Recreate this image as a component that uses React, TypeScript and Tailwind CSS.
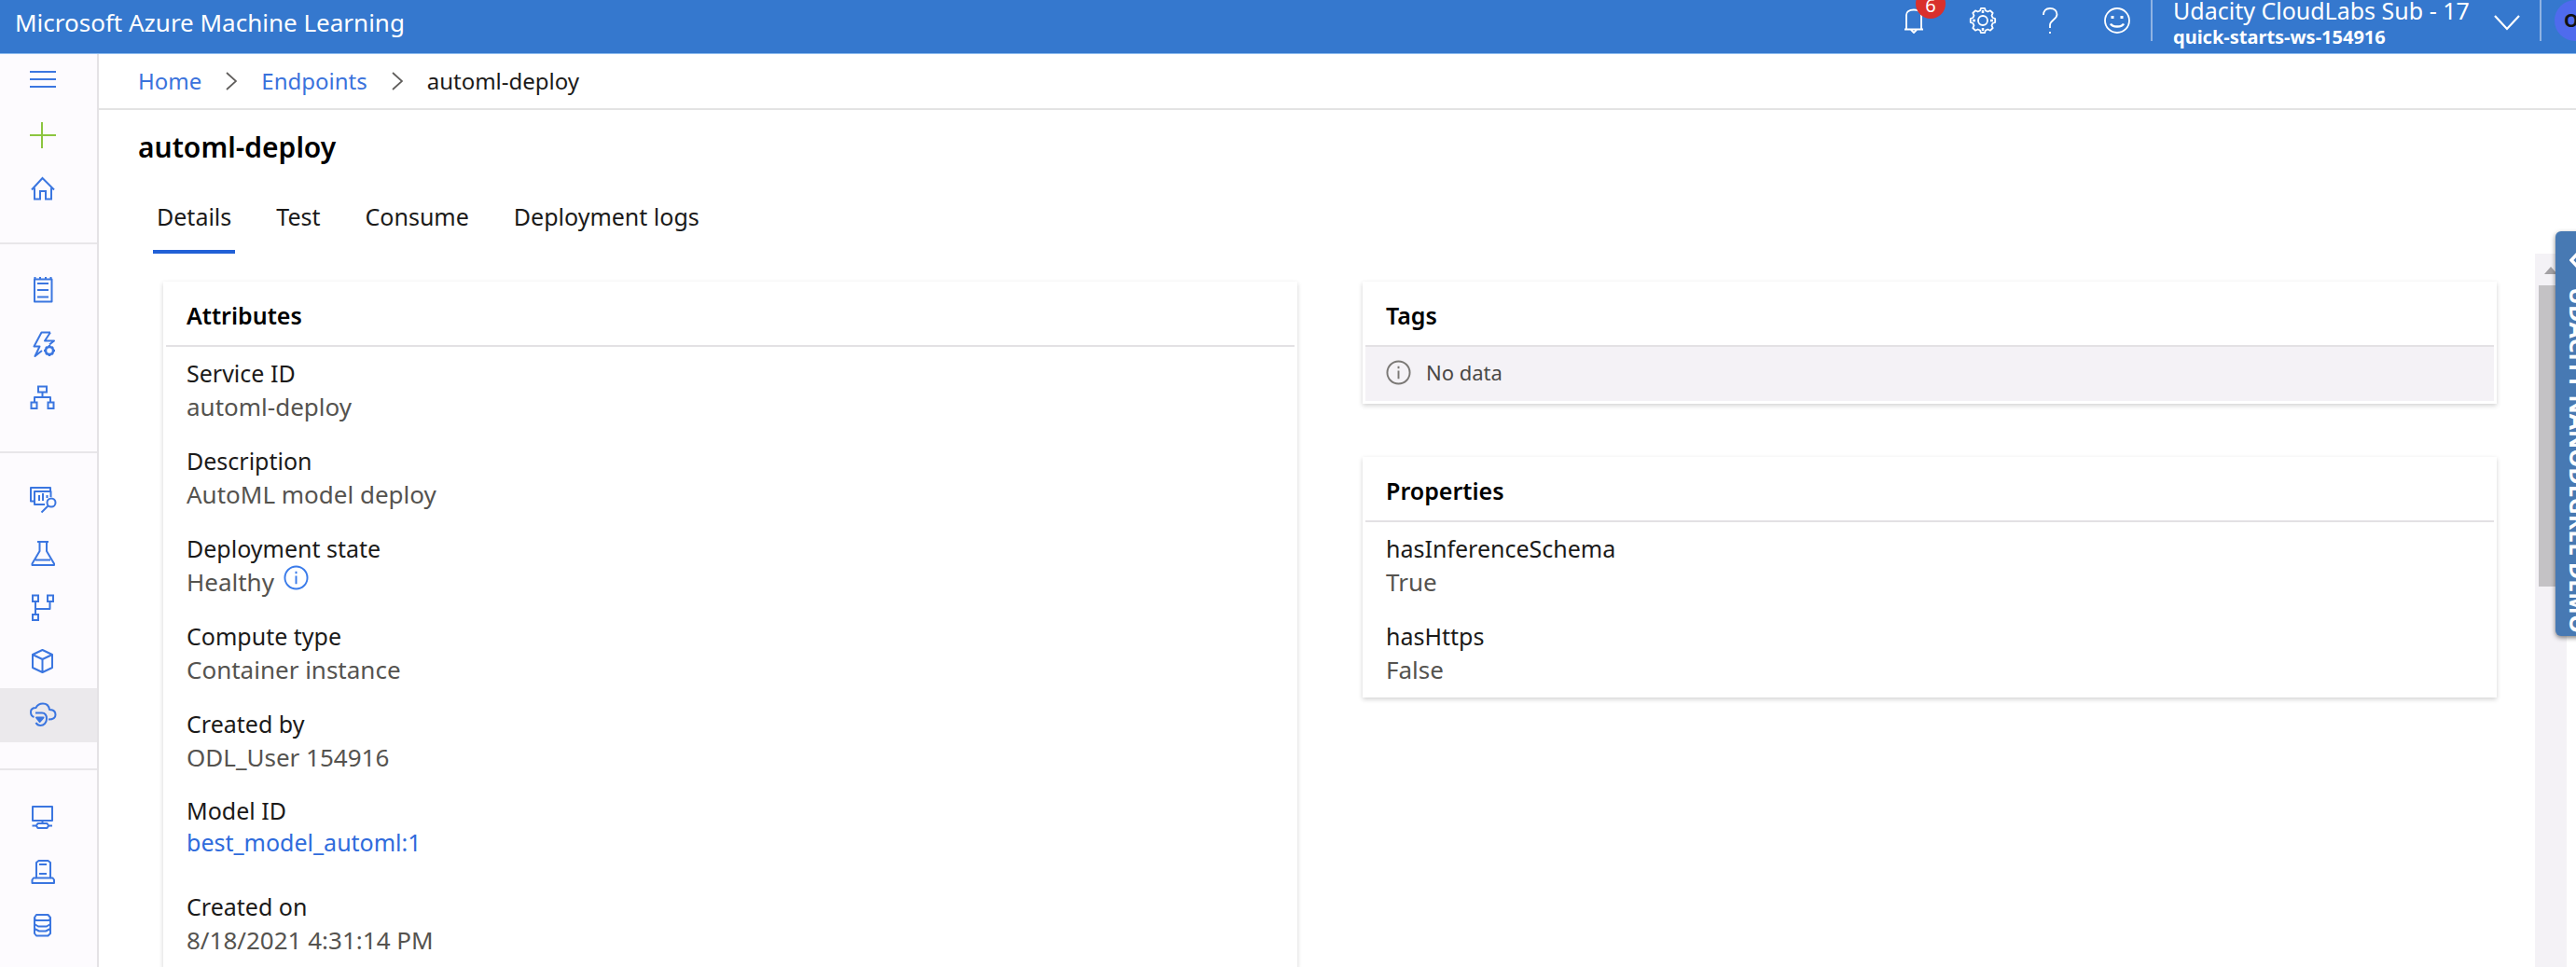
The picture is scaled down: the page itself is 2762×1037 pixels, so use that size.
import React from "react";

type IconProps = { className?: string; children: React.ReactNode };

function Icon({ className = "", children }: IconProps) {
  return (
    <svg
      viewBox="0 0 28 28"
      className={"h-7 w-7 shrink-0 overflow-visible " + className}
      fill="none"
      stroke="currentColor"
      strokeWidth="2"
      strokeLinejoin="round"
      aria-hidden="true"
    >
      {children}
    </svg>
  );
}

type NavItem = { label: string; icon: React.ReactNode; active?: boolean; green?: boolean };

const navGroups: NavItem[][] = [
  [
    { label: "Menu", icon: <path d="M0 4H28M0 12H28M0 20H28" /> },
    { label: "New", green: true, icon: <path d="M0 14H28M13 0V28" /> },
    {
      label: "Home",
      icon: <path d="M2 14.5L13.5 2L26 14.5M5 12.5V24.5H11V16H17V24.5H23V12.5" strokeLinejoin="miter" />,
    },
  ],
  [
    {
      label: "Notebooks",
      icon: (
        <>
          <path d="M5 2.5H23.5V26.5H5Z" />
          <path d="M8 7H20M8 14H20M8 21.5H20" />
          <path d="M5.5 0V3M11 0V3M17 0V3M22.5 0V3" />
        </>
      ),
    },
    {
      label: "Automated ML",
      icon: (
        <>
          <path d="M22 1.5H12.5L4.5 16.5H10.5L5.5 27L13 21M22 1.5L16 10.5H26L21 14.5" />
          <circle cx="21" cy="21" r="4" strokeWidth="2.5" />
          <path d="M21 15V17.5M21 24.5V27M15 21H17.5M24.5 21H27M17 17L18.5 18.5M25 17L23.5 18.5M17 25L18.5 23.5M25 25L23.5 23.5" strokeWidth="2.5" />
        </>
      ),
    },
    {
      label: "Designer",
      icon: (
        <>
          <path d="M9 1.5H18V7.5H9ZM1.5 18.5H7.5V25H1.5ZM19.5 18.5H25.5V25H19.5Z" strokeLinejoin="miter" />
          <path d="M13.5 7.5V13M5 18.5V13H22V18.5" />
        </>
      ),
    },
  ],
  [
    {
      label: "Datasets",
      icon: (
        <>
          <path d="M5 16.5H1V2H22V6" />
          <path d="M16 20H5V6H22.5V12" />
          <path d="M10 16V10M14 16V8M18.5 13V10" />
          <circle cx="23" cy="18" r="4.5" />
          <path d="M19.5 21.5L12.5 28.5" />
        </>
      ),
    },
    {
      label: "Experiments",
      icon: <path d="M8 2H20M10.5 2V12L2.5 25.5V27H26V25.5L18 12V2M6 21.5H22" />,
    },
    {
      label: "Pipelines",
      icon: (
        <>
          <path d="M3 1.5H9V8H3ZM19 1.5H25V8H19ZM3 22H9V28H3Z" strokeLinejoin="miter" />
          <path d="M6 8V22M6 16H21.5V8" />
        </>
      ),
    },
    {
      label: "Models",
      icon: <path d="M13.5 2L24 7V21L13.5 26L3 21V7ZM3 7L13.5 12L24 7M13.5 12V26" />,
    },
    {
      label: "Endpoints",
      active: true,
      icon: (
        <>
          <path d="M4.5 16C1.5 15 1 12.5 1 10.5C1 7.5 3 6 6.5 6C8 3 10.5 1.5 14 1.5C18 1.5 20.5 4 21 8C25 8 27.5 10 27.5 13.5C27.5 16.5 25 18.500 20 18.500" />
          <path d="M6 11.5H13C16.5 11.5 18 14.5 18 18C18 22 15 25 11.5 25C9 25 7.5 24 6.5 22" />
          <path d="M7 16.5H14.5L10.5 21Z" fill="currentColor" />
        </>
      ),
    },
  ],
  [
    {
      label: "Compute",
      icon: (
        <>
          <path d="M3 4H24V19H3ZM13.5 19V22M2.5 24.5H7M20 24.5H24" />
          <path d="M8.5 22H18.5L20 24.5L18.5 27H8.5L7 24.5Z" />
        </>
      ),
    },
    {
      label: "Datastores",
      icon: (
        <>
          <path d="M7 22.5V6L9.5 4H19.5L22 6V22.5Z" />
          <path d="M10 8H18M10 18H18" />
          <path d="M7 22.5H4L2.5 24.5V28H26V24.5L24.5 22.5H22" />
        </>
      ),
    },
    {
      label: "Data labeling",
      icon: (
        <>
          <path d="M5 7V24L7 26.5H19.5L22 24V7" />
          <path d="M5 7L7 4H19.5L22 7L21 10H6Z" />
          <path d="M5 14L9 16.5H18L22 14M5 19L10 21.5H17L22 19" />
        </>
      ),
    },
  ],
];

function SideNav() {
  return (
    <nav aria-label="Workspace" className="w-[106px] shrink-0 overflow-hidden border-r-2 border-[#e4e2e5] bg-[#fdfbfe]">
      {navGroups.map((group, i) => (
        <div key={i} className={i === 0 ? "pb-7" : "border-t-2 border-[#e8e6e9] pt-5 pb-7"}>
          {group.map((item) => (
            <button
              key={item.label}
              type="button"
              aria-label={item.label}
              aria-current={item.active ? "page" : undefined}
              className={
                "flex h-[58px] w-full items-center pl-8 " +
                (item.active ? "bg-[#ebe9ec] " : "") +
                (item.green ? "text-[#8cc540]" : "text-[#3b76e0]")
              }
            >
              <Icon>{item.icon}</Icon>
            </button>
          ))}
        </div>
      ))}
    </nav>
  );
}

function Header() {
  return (
    <header className="flex h-[58px] shrink-0 items-start overflow-hidden border-b border-[#8fbdf0] bg-[#3578ce] text-white">
      <div className="flex-1 pl-4 text-[26px] leading-[48px]">Microsoft Azure Machine Learning</div>

      <button type="button" aria-label="Notifications" className="relative flex h-11 w-[72px] items-center justify-center">
        <Icon>
          <path d="M2 23.5H22M4 23.5V8C4 4.5 7 2.5 12 2.5C17 2.5 20 4.5 20 8V23.5M9 24L12 27L15 24" strokeWidth="1.8" />
        </Icon>
        <span className="absolute -top-3 left-9 flex h-8 w-8 items-center justify-center rounded-full bg-[#d9302c] pt-1 text-[20px] leading-7">
          6
        </span>
      </button>
      <button type="button" aria-label="Settings" className="flex h-11 w-[72px] items-center justify-center">
        <Icon>
          <path
            strokeWidth="1.8"
            d="M11 3.5L12 0.8H16L17 3.5L19.3 4.5L22 3.3L24.7 6L23.5 8.7L24.5 11L27.2 12V16L24.5 17L23.5 19.3L24.7 22L22 24.7L19.3 23.5L17 24.5L16 27.2H12L11 24.5L8.7 23.5L6 24.7L3.3 22L4.5 19.3L3.5 17L0.8 16V12L3.5 11L4.5 8.7L3.3 6L6 3.3L8.7 4.5Z"
          />
          <circle cx="14" cy="14" r="5" strokeWidth="1.8" />
          <path d="M14 3V6M14 22V25M3 14H6M22 14H25" strokeWidth="2.5" />
        </Icon>
      </button>
      <button type="button" aria-label="Help" className="flex h-11 w-[72px] items-center justify-center">
        <Icon>
          <path
            strokeWidth="1.8"
            d="M7 8C7 3.5 9.5 1 14 1C18.5 1 21.5 3.5 21.5 7.5C21.5 13 14 13.5 14 19V22M14 26V28"
          />
        </Icon>
      </button>
      <button type="button" aria-label="Feedback" className="flex h-11 w-[72px] items-center justify-center">
        <Icon>
          <circle cx="14" cy="14" r="13" strokeWidth="1.8" />
          <path d="M7 17.5C9 21.5 19 21.5 21 17.5" strokeWidth="2.5" />
          <path d="M7.5 10.5H10.5M17.5 10.5H20.5" strokeWidth="3" />
        </Icon>
      </button>

      <button type="button" className="flex h-[58px] items-start text-left">
        <span className="h-11 border-l-2 border-[#8fb3e3]" />
        <span className="block w-[366px] pl-[22px]">
          <span className="block text-[25px] leading-[22px]">Udacity CloudLabs Sub - 17</span>
          <span className="block text-[20px] font-bold leading-9">quick-starts-ws-154916</span>
        </span>
        <svg viewBox="0 0 28 18" className="mt-[15px] mr-[21px] h-[18px] w-7" fill="none" stroke="currentColor" strokeWidth="2.2" aria-hidden="true">
          <path d="M1 2L14 16L27 2" />
        </svg>
        <span className="h-11 border-l-2 border-[#8fb3e3]" />
      </button>
      <div className="w-[37px] overflow-hidden pl-[14px]">
        <button type="button" aria-label="Account" className="flex h-11 w-11 items-center rounded-full bg-[#4f6bed] pl-2.5 text-[20px] font-bold text-[#111]">
          O
        </button>
      </div>
    </header>
  );
}

function Chevron() {
  return (
    <svg viewBox="0 0 12 20" className="h-5 w-3" fill="none" stroke="#605e5c" strokeWidth="1.8" aria-hidden="true">
      <path d="M1 1L11 10L1 19" />
    </svg>
  );
}

function InfoIcon({ className = "" }: { className?: string }) {
  return (
    <svg viewBox="0 0 28 28" className={"h-[27px] w-[27px] " + className} fill="none" stroke="currentColor" strokeWidth="2" aria-hidden="true">
      <circle cx="14" cy="14" r="12.5" />
      <path d="M14 12V21M14 7V9.5" />
    </svg>
  );
}

function Card({ title, className = "", children }: { title: string; className?: string; children: React.ReactNode }) {
  return (
    <section className={"bg-white px-[3px] shadow-[0_2px_5px_rgba(0,0,0,0.18)] " + className}>
      <h2 className="flex h-[70px] items-center border-b-2 border-[#e3e1e4] px-[22px] pt-1.5 text-[25px] font-semibold text-black">
        {title}
      </h2>
      {children}
    </section>
  );
}

function Field({ label, last, children }: { label: string; last?: boolean; children: React.ReactNode }) {
  return (
    <div className={last ? "" : "mb-[22px]"}>
      <dt className="text-[25px] leading-9 text-[#1b1a19]">{label}</dt>
      <dd className="flex text-[26px] leading-9 text-[#55534f]">{children}</dd>
    </div>
  );
}

const tabs = ["Details", "Test", "Consume", "Deployment logs"];

export default function App() {
  return (
    <div className="relative flex h-screen flex-col overflow-hidden bg-white font-['Noto_Sans',sans-serif] text-[#1b1a19]">
      <Header />
      <div className="flex min-h-0 flex-1">
        <SideNav />
        <main className="flex min-w-0 flex-1 flex-col">
          <nav aria-label="Breadcrumb" className="flex h-[60px] shrink-0 items-center gap-[26px] border-b-2 border-[#e3e3e3] pl-[42px] text-[24px]">
            <a href="#home" className="text-[#3a72dc]">Home</a>
            <Chevron />
            <a href="#endpoints" className="text-[#3a72dc]">Endpoints</a>
            <Chevron />
            <span aria-current="page">automl-deploy</span>
          </nav>
          <h1 className="mt-5 shrink-0 pl-[42px] text-[30px] font-semibold leading-10 text-black">automl-deploy</h1>
          <div role="tablist" className="mt-3.5 flex h-20 shrink-0 gap-10 pl-[58px]">
            {tabs.map((tab, i) => (
              <button
                key={tab}
                type="button"
                role="tab"
                aria-selected={i === 0}
                className={
                  "border-b-4 px-1 pt-1.5 text-[25px] " + (i === 0 ? "border-[#2160d6]" : "border-transparent")
                }
              >
                {tab}
              </button>
            ))}
          </div>

          <div className="flex min-h-0 flex-1">
            <div className="grid min-w-0 flex-1 grid-cols-2 gap-[70px] overflow-hidden pt-[30px] pr-[41px] pl-[69px]">
              <Card title="Attributes">
                <dl className="px-[22px] pt-2.5 pb-3">
                  <Field label="Service ID">automl-deploy</Field>
                  <Field label="Description">AutoML model deploy</Field>
                  <Field label="Deployment state">
                    Healthy
                    <InfoIcon className="ml-2.5 text-[#3a7bea]" />
                  </Field>
                  <Field label="Compute type">Container instance</Field>
                  <Field label="Created by">ODL_User 154916</Field>
                  <div className="mb-[34px]">
                    <dt className="text-[25px] leading-[34px] text-[#1b1a19]">Model ID</dt>
                    <dd className="text-[25px] leading-[34px]">
                      <a href="#model" className="text-[#2f6bdc]">best_model_automl:1</a>
                    </dd>
                  </div>
                  <Field label="Created on" last>8/18/2021 4:31:14 PM</Field>
                </dl>
              </Card>
              <div className="flex min-w-0 flex-col gap-[57px]">
                <Card title="Tags" className="pb-[3px]">
                  <div className="flex h-[58px] items-center gap-4 bg-[#f4f2f6] px-[22px] pb-1 text-[22px] text-[#4a4845]">
                    <InfoIcon className="text-[#7a7875]" />
                    No data
                  </div>
                </Card>
                <Card title="Properties">
                  <dl className="px-[22px] pt-2.5 pb-3">
                    <Field label="hasInferenceSchema">True</Field>
                    <Field label="hasHttps" last>False</Field>
                  </dl>
                </Card>
              </div>
            </div>
            <div className="mr-2.5 flex w-[34px] shrink-0 flex-col items-end bg-[#f4f2f6]" aria-hidden="true">
              <svg viewBox="0 0 30 34" className="h-[34px] w-[30px]">
                <path d="M6 22L13 14L20 22Z" fill="#a3a1a4" />
              </svg>
              <div className="h-[323px] w-[30px] bg-[#c4c2c5]" />
            </div>
          </div>
        </main>
      </div>

      <button
        type="button"
        className="absolute top-[248px] -right-[14px] flex h-[434px] w-9 flex-col items-center gap-3.5 rounded-l-md bg-[#4779b3] pt-4 pl-3.5 text-white shadow-[0_2px_5px_rgba(0,0,0,0.5)]"
      >
        <svg viewBox="0 0 20 30" className="h-[30px] w-5 shrink-0" fill="none" stroke="currentColor" strokeWidth="3.5" aria-hidden="true">
          <path d="M14 2L2 15L14 28" />
        </svg>
        <span className="whitespace-nowrap font-['Open_Sans',sans-serif] text-[25px] font-bold leading-6 [writing-mode:vertical-rl]">
          UDACITY NANODEGREE DEMO
        </span>
      </button>
    </div>
  );
}
